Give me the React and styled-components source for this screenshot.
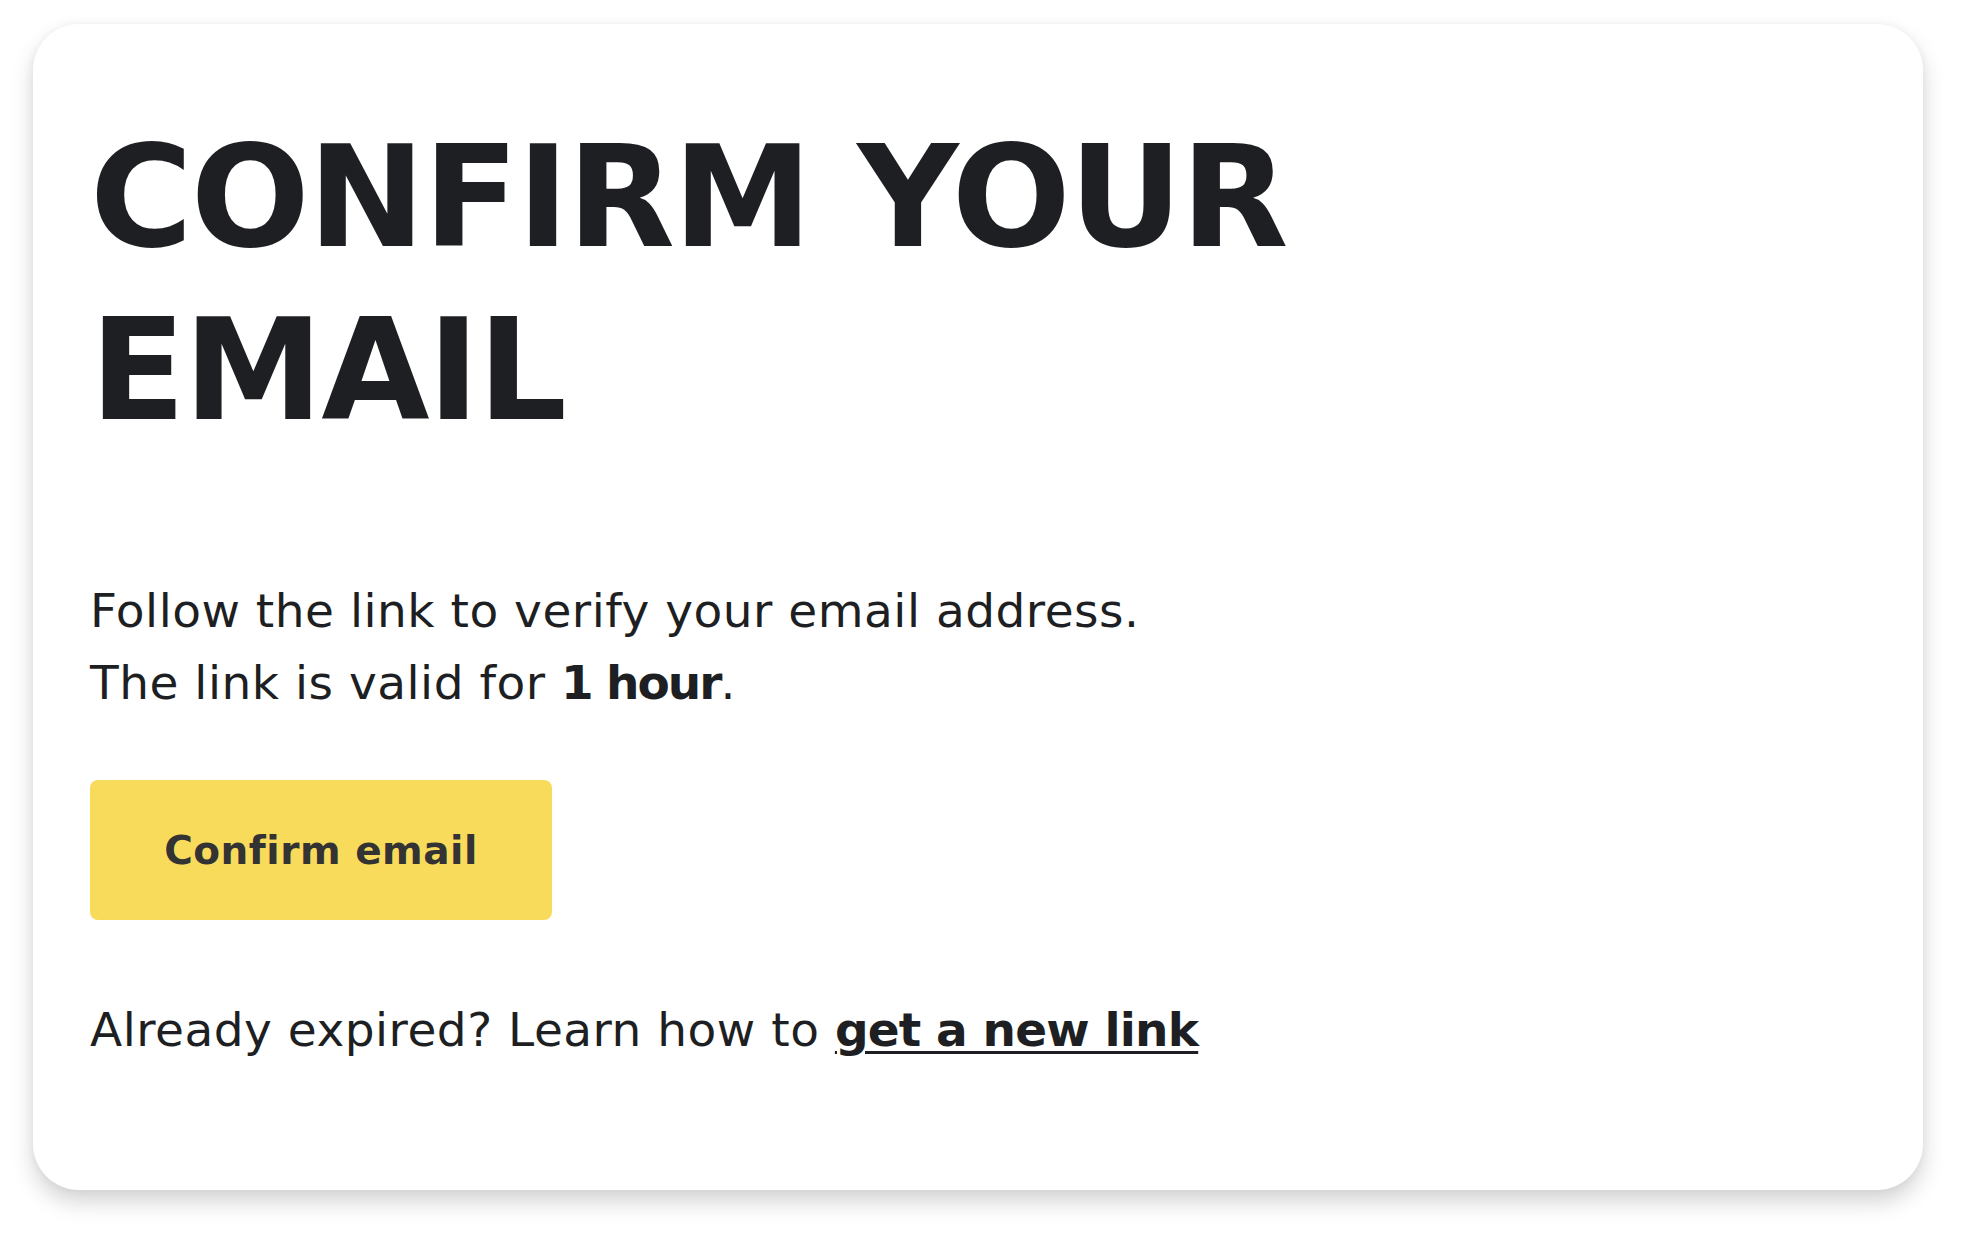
import React from "react";
import styled, { createGlobalStyle } from "styled-components";

const GlobalStyle = createGlobalStyle`
  html, body {
    margin: 0;
    padding: 0;
    background: #ffffff;
  }
  body {
    font-family: "DejaVu Sans", "Liberation Sans", sans-serif;
    color: #1e1f23;
  }
`;

const Page = styled.main`
  padding: 24px 0 0 33px;
  min-height: 100vh;
  box-sizing: border-box;
`;

const Card = styled.section`
  width: 1890px;
  box-sizing: border-box;
  padding: 87px 56px 124px 57px;
  background: #ffffff;
  border-radius: 46px;
  box-shadow: 0 12px 22px rgba(0, 0, 0, 0.17), 0 0 10px rgba(0, 0, 0, 0.05);
  display: flex;
  flex-direction: column;
  align-items: flex-start;
`;

const Title = styled.h1`
  margin: 0;
  font-size: 140px;
  line-height: 173px;
  font-weight: 700;
  letter-spacing: -1.9px;
  text-transform: uppercase;
  color: #1e1f23;
  max-width: 1300px;
`;

const Text = styled.p`
  margin: ${({ $top }) => $top || 0}px 0 0;
  font-size: 47px;
  line-height: 72px;
  font-weight: 400;
  letter-spacing: 0.5px;
  color: #1e1f23;

  b {
    font-weight: 700;
    letter-spacing: -2px;
  }
`;

const Button = styled.button`
  margin-top: 61px;
  width: 462px;
  height: 140px;
  display: flex;
  align-items: center;
  justify-content: center;
  border: none;
  border-radius: 8px;
  background: #f9db5c;
  color: #333333;
  font-family: inherit;
  font-size: 39px;
  font-weight: 700;
  letter-spacing: 0.5px;
  cursor: pointer;
`;

const Link = styled.a`
  color: #1e1f23;
  font-weight: 700;
  letter-spacing: -0.8px;
  text-decoration: underline;
  text-decoration-thickness: 3px;
  text-underline-offset: 5px;
  cursor: pointer;
`;

export default function App() {
  return (
    <>
      <GlobalStyle />
      <Page>
        <Card>
          <Title>Confirm your email</Title>
          <Text $top={118}>
            Follow the link to verify your email address.
            <br />
            The link is valid for <b>1 hour</b>.
          </Text>
          <Button>Confirm email</Button>
          <Text $top={74}>
            Already expired? Learn how to <Link>get a new link</Link>
          </Text>
        </Card>
      </Page>
    </>
  );
}
